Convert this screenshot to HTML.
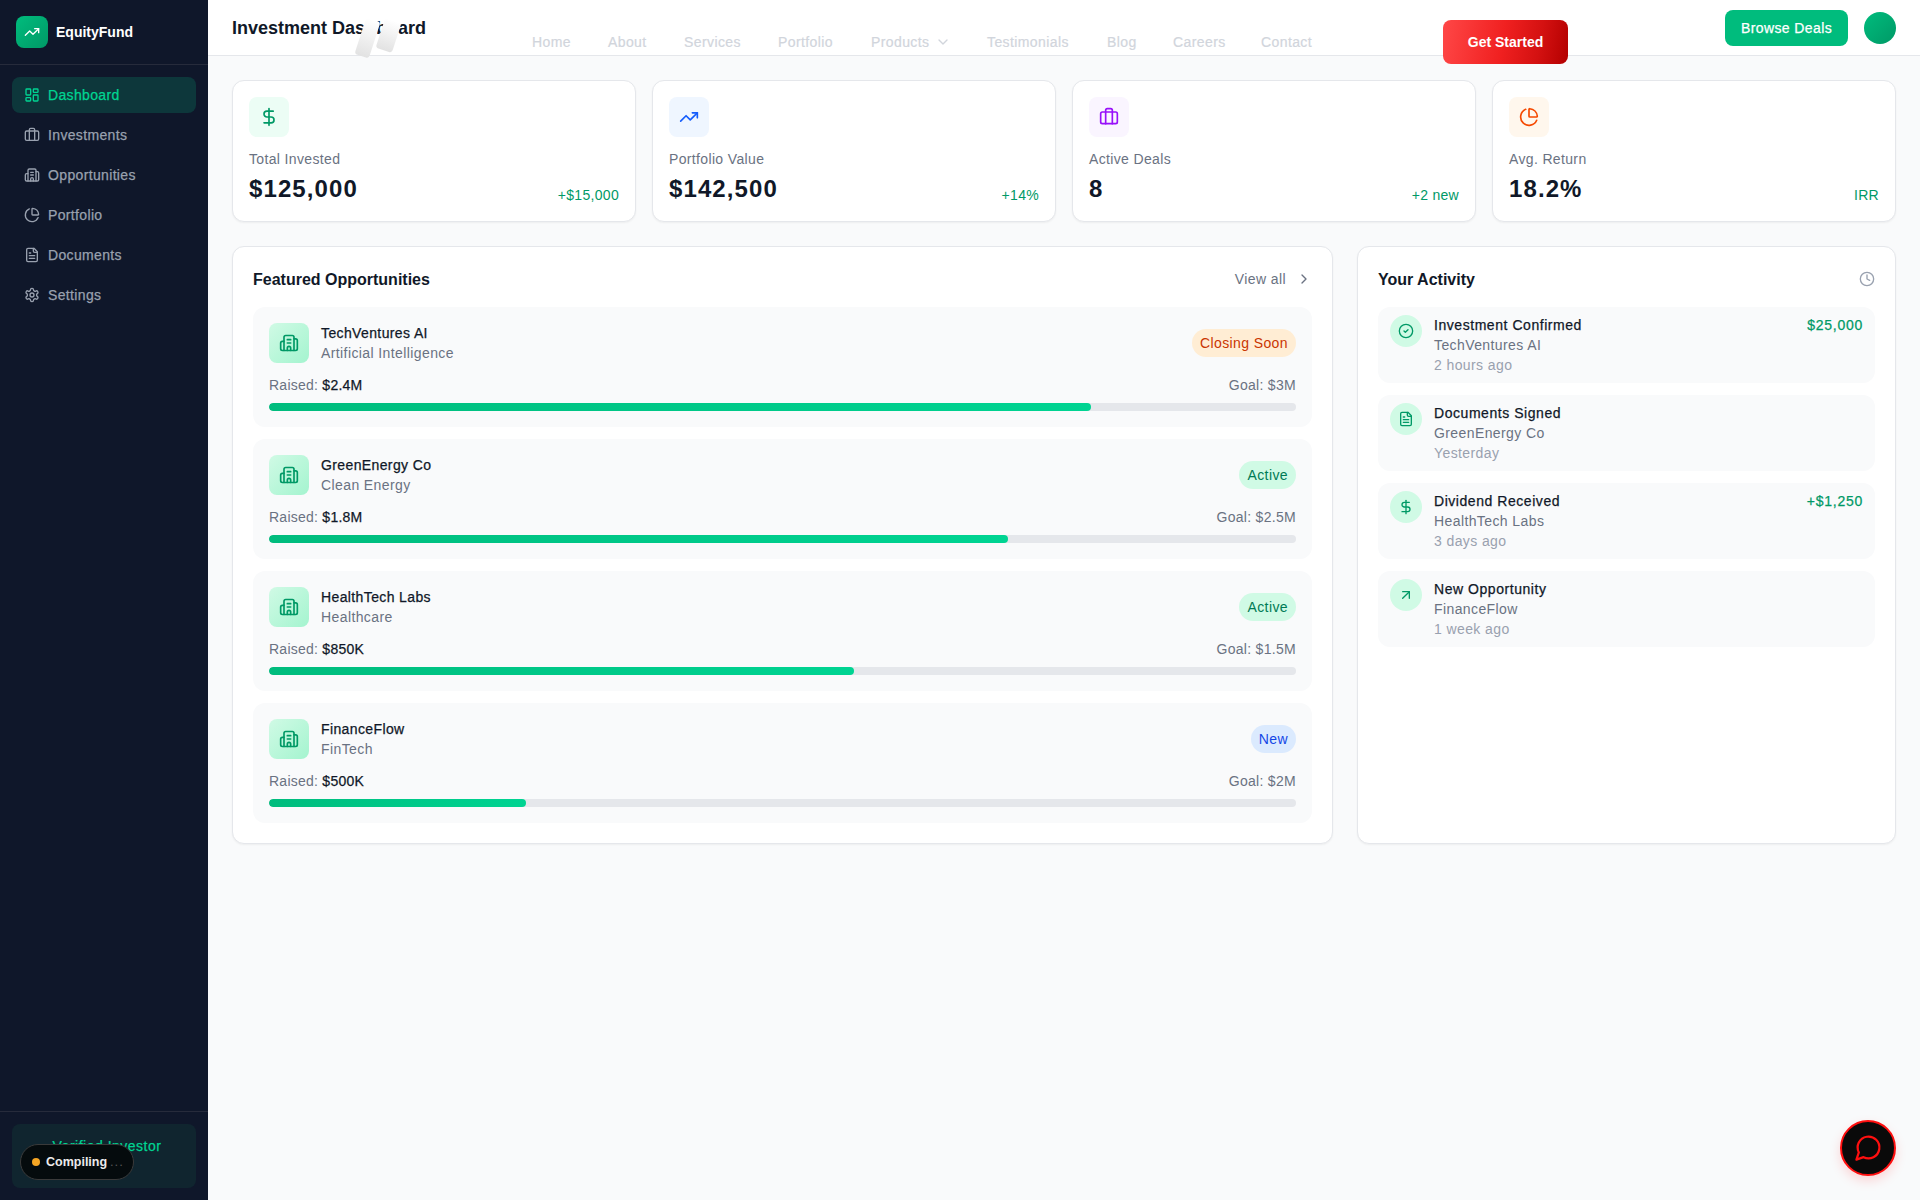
<!DOCTYPE html>
<html><head><meta charset="utf-8">
<style>
*{box-sizing:border-box;margin:0;padding:0}
html,body{width:1920px;height:1200px;overflow:hidden;background:#f9fafb;font-family:"Liberation Sans",sans-serif;color:#101828}
.abs{position:absolute}
svg.i{fill:none;stroke:currentColor;stroke-width:2;stroke-linecap:round;stroke-linejoin:round;display:block}
/* sidebar */
#sb{position:absolute;left:0;top:0;width:208px;height:1200px;background:#0f172a}
#sbh{position:absolute;left:0;top:0;width:208px;height:65px;border-bottom:1px solid #262b3b}
#logo{position:absolute;left:16px;top:16px;width:32px;height:32px;border-radius:8px;background:linear-gradient(135deg,#00bc7d,#009966);color:#fff}
#logo svg{position:absolute;left:8px;top:8px}
#brand{position:absolute;left:56px;top:22px;font-size:14px;line-height:20px;font-weight:700;color:#fff}
.nav{position:absolute;left:12px;width:184px;height:36px;border-radius:8px;color:#99a1af;font-size:14px;line-height:20px;letter-spacing:.35px}
.nav svg{position:absolute;left:12px;top:10px}
.nav span{position:absolute;left:36px;top:8px}
.nav.act{background:#0d373b;color:#00d492}
#sbf{position:absolute;left:0;top:1111px;width:208px;height:89px;border-top:1px solid #262b3b}
#ver{position:absolute;left:12px;top:1124px;width:184px;height:64px;border-radius:8px;background:#10252f;color:#00d492;font-size:14px;line-height:20px;text-align:center;padding-top:12px;padding-left:6px;letter-spacing:.5px}
/* header */
#hd{position:absolute;left:208px;top:0;width:1712px;height:56px;background:#fff;border-bottom:1px solid #e5e7eb}
#title{position:absolute;left:232px;top:16px;font-size:18px;line-height:24px;font-weight:700;color:#101828}
.lnk{position:absolute;top:32px;font-size:14px;line-height:20px;color:#d1d5dc;letter-spacing:.4px;-webkit-text-stroke:.2px currentColor}
#gs{position:absolute;left:1443px;top:20px;width:125px;height:44px;border-radius:8px;background:linear-gradient(100deg,#ff4747 0%,#f02020 48%,#d41111 76%,#b30000 100%);color:#fff;font-size:14px;font-weight:700;line-height:44px;text-align:center}
#bd{position:absolute;left:1725px;top:10px;width:123px;height:36px;border-radius:8px;background:#00bc7d;color:#fff;font-size:14px;line-height:36px;text-align:center;letter-spacing:.4px}
#av{position:absolute;left:1864px;top:12px;width:32px;height:32px;border-radius:50%;background:linear-gradient(135deg,#00bc7d,#009966)}
/* stat cards */
.card{position:absolute;background:#fff;border:1px solid #e5e7eb;border-radius:12px;box-shadow:0 1px 2px rgba(0,0,0,.05)}
.stat{top:80px;width:404px;height:142px}
.sico{position:absolute;left:16px;top:16px;width:40px;height:40px;border-radius:8px}
.sico svg{position:absolute;left:10px;top:10px}
.slab{position:absolute;left:16px;top:68px;font-size:14px;line-height:20px;color:#6a7282;letter-spacing:.35px}
.sval{position:absolute;left:16px;top:92px;font-size:24px;line-height:32px;font-weight:700;color:#101828;letter-spacing:1.1px}
.schg{position:absolute;right:16px;top:104px;font-size:14px;line-height:20px;color:#009966;letter-spacing:.3px}

/* featured */
.big{top:246px;height:598px}
.ctitle{position:absolute;left:20px;top:21px;font-size:16px;line-height:24px;font-weight:700;color:#101828}
.item{position:absolute;left:20px;width:1059px;height:120px;background:#f9fafb;border-radius:12px}
.bico{position:absolute;left:16px;top:16px;width:40px;height:40px;border-radius:8px;background:linear-gradient(135deg,#d0fae5,#a4f4cf);color:#009966}
.bico svg{position:absolute;left:10px;top:10px}
.iname{position:absolute;left:68px;top:16px;font-size:14px;line-height:20px;color:#101828;letter-spacing:.38px}
.icat{position:absolute;left:68px;top:36px;font-size:14px;line-height:20px;color:#6a7282;letter-spacing:.4px}
.badge{position:absolute;right:16px;top:22px;height:28px;padding:0 8px;border-radius:14px;font-size:14px;line-height:28px;letter-spacing:.4px}
.raised{position:absolute;left:16px;top:68px;font-size:14px;line-height:20px;color:#6a7282;letter-spacing:.25px}
.raised b{font-weight:400;color:#101828;-webkit-text-stroke:0.25px currentColor}
.goal{position:absolute;right:16px;top:68px;font-size:14px;line-height:20px;color:#6a7282;letter-spacing:.3px}
.bar{position:absolute;left:16px;top:96px;width:1027px;height:8px;border-radius:4px;background:#e5e7eb;overflow:hidden}
.bar i{position:absolute;left:0;top:0;height:8px;border-radius:4px;background:linear-gradient(90deg,#00bc7d,#00d492)}
/* activity */
.aitem{position:absolute;left:20px;width:497px;height:76px;background:#f9fafb;border-radius:12px}
.acir{position:absolute;left:12px;top:8px;width:32px;height:32px;border-radius:50%;background:#d0fae5;color:#009966}
.acir svg{position:absolute;left:8px;top:8px}
.at1{position:absolute;left:56px;top:8px;font-size:14px;line-height:20px;color:#101828;letter-spacing:.55px}
.at2{position:absolute;left:56px;top:28px;font-size:14px;line-height:20px;color:#6a7282;letter-spacing:.4px}
.at3{position:absolute;left:56px;top:48px;font-size:14px;line-height:20px;color:#99a1af;letter-spacing:.4px}
.aamt{position:absolute;right:12px;top:8px;font-size:14px;line-height:20px;color:#009966;letter-spacing:.75px}

.med{-webkit-text-stroke:0.25px currentColor}
</style></head><body>

<div id="sb">
  <div id="sbh"></div>
  <div id="logo"><svg class="i" width="16" height="16" viewBox="0 0 24 24"><polyline points="22 7 13.5 15.5 8.5 10.5 2 17"/><polyline points="16 7 22 7 22 13"/></svg></div>
  <div id="brand">EquityFund</div>

  <div class="nav act" style="top:77px"><svg class="i" width="16" height="16" viewBox="0 0 24 24"><rect width="7" height="9" x="3" y="3" rx="1"/><rect width="7" height="5" x="14" y="3" rx="1"/><rect width="7" height="9" x="14" y="12" rx="1"/><rect width="7" height="5" x="3" y="16" rx="1"/></svg><span class="med">Dashboard</span></div>
  <div class="nav" style="top:117px"><svg class="i" width="16" height="16" viewBox="0 0 24 24"><path d="M16 20V4a2 2 0 0 0-2-2h-4a2 2 0 0 0-2 2v16"/><rect width="20" height="14" x="2" y="6" rx="2"/></svg><span class="med">Investments</span></div>
  <div class="nav" style="top:157px"><svg class="i" width="16" height="16" viewBox="0 0 24 24"><path d="M10 12h4"/><path d="M10 8h4"/><path d="M14 21v-3a2 2 0 0 0-4 0v3"/><path d="M6 10H4a2 2 0 0 0-2 2v7a2 2 0 0 0 2 2h16a2 2 0 0 0 2-2V9a2 2 0 0 0-2-2h-2"/><path d="M6 21V5a2 2 0 0 1 2-2h8a2 2 0 0 1 2 2v16"/></svg><span class="med">Opportunities</span></div>
  <div class="nav" style="top:197px"><svg class="i" width="16" height="16" viewBox="0 0 24 24"><path d="M21 12c.552 0 1.005-.449.95-.998a10 10 0 0 0-8.953-8.951c-.55-.055-.998.398-.998.95v8a1 1 0 0 0 1 1z"/><path d="M21.21 15.89A10 10 0 1 1 8 2.83"/></svg><span class="med">Portfolio</span></div>
  <div class="nav" style="top:237px"><svg class="i" width="16" height="16" viewBox="0 0 24 24"><path d="M15 2H6a2 2 0 0 0-2 2v16a2 2 0 0 0 2 2h12a2 2 0 0 0 2-2V7Z"/><path d="M14 2v4a2 2 0 0 0 2 2h4"/><path d="M10 9H8"/><path d="M16 13H8"/><path d="M16 17H8"/></svg><span class="med">Documents</span></div>
  <div class="nav" style="top:277px"><svg class="i" width="16" height="16" viewBox="0 0 24 24"><path d="M12.22 2h-.44a2 2 0 0 0-2 2v.18a2 2 0 0 1-1 1.73l-.43.25a2 2 0 0 1-2 0l-.15-.08a2 2 0 0 0-2.73.73l-.22.38a2 2 0 0 0 .73 2.73l.15.1a2 2 0 0 1 1 1.72v.51a2 2 0 0 1-1 1.74l-.15.09a2 2 0 0 0-.73 2.73l.22.38a2 2 0 0 0 2.73.73l.15-.08a2 2 0 0 1 2 0l.43.25a2 2 0 0 1 1 1.73V20a2 2 0 0 0 2 2h.44a2 2 0 0 0 2-2v-.18a2 2 0 0 1 1-1.73l.43-.25a2 2 0 0 1 2 0l.15.08a2 2 0 0 0 2.73-.73l.22-.39a2 2 0 0 0-.73-2.73l-.15-.08a2 2 0 0 1-1-1.74v-.5a2 2 0 0 1 1-1.74l.15-.09a2 2 0 0 0 .73-2.73l-.22-.38a2 2 0 0 0-2.73-.73l-.15.08a2 2 0 0 1-2 0l-.43-.25a2 2 0 0 1-1-1.73V4a2 2 0 0 0-2-2z"/><circle cx="12" cy="12" r="3"/></svg><span class="med">Settings</span></div>

  <div id="sbf"></div>
  <div id="ver" class="med">Verified Investor</div>
</div>

<div id="hd"></div>
<div id="title">Investment Dashboard</div>
<div class="lnk" style="left:532px">Home</div>
<div class="lnk" style="left:608px">About</div>
<div class="lnk" style="left:684px">Services</div>
<div class="lnk" style="left:778px">Portfolio</div>
<div class="lnk" style="left:871px">Products</div>
<div class="abs" style="left:935px;top:34px;color:#d1d5dc"><svg class="i" width="16" height="16" viewBox="0 0 24 24"><path d="m6 9 6 6 6-6"/></svg></div>
<div class="lnk" style="left:987px">Testimonials</div>
<div class="lnk" style="left:1107px">Blog</div>
<div class="lnk" style="left:1173px">Careers</div>
<div class="lnk" style="left:1261px">Contact</div>
<div id="gs">Get Started</div>
<div id="bd" class="med">Browse Deals</div>
<div id="av"></div>

<!-- STATS -->
<div class="card stat" style="left:232px">
  <div class="sico" style="background:#ecfdf5;color:#009966"><svg class="i" width="20" height="20" viewBox="0 0 24 24"><line x1="12" x2="12" y1="2" y2="22"/><path d="M17 5H9.5a3.5 3.5 0 0 0 0 7h5a3.5 3.5 0 0 1 0 7H6"/></svg></div>
  <div class="slab">Total Invested</div><div class="sval">$125,000</div><div class="schg">+$15,000</div>
</div>
<div class="card stat" style="left:652px">
  <div class="sico" style="background:#eff6ff;color:#155dfc"><svg class="i" width="20" height="20" viewBox="0 0 24 24"><polyline points="22 7 13.5 15.5 8.5 10.5 2 17"/><polyline points="16 7 22 7 22 13"/></svg></div>
  <div class="slab">Portfolio Value</div><div class="sval">$142,500</div><div class="schg">+14%</div>
</div>
<div class="card stat" style="left:1072px">
  <div class="sico" style="background:#faf5ff;color:#9810fa"><svg class="i" width="20" height="20" viewBox="0 0 24 24"><path d="M16 20V4a2 2 0 0 0-2-2h-4a2 2 0 0 0-2 2v16"/><rect width="20" height="14" x="2" y="6" rx="2"/></svg></div>
  <div class="slab">Active Deals</div><div class="sval">8</div><div class="schg">+2 new</div>
</div>
<div class="card stat" style="left:1492px">
  <div class="sico" style="background:#fff7ed;color:#f54900"><svg class="i" width="20" height="20" viewBox="0 0 24 24"><path d="M21 12c.552 0 1.005-.449.95-.998a10 10 0 0 0-8.953-8.951c-.55-.055-.998.398-.998.95v8a1 1 0 0 0 1 1z"/><path d="M21.21 15.89A10 10 0 1 1 8 2.83"/></svg></div>
  <div class="slab">Avg. Return</div><div class="sval">18.2%</div><div class="schg">IRR</div>
</div>


<!-- FEATURED -->
<div class="card big" style="left:232px;width:1101px">
  <div class="ctitle">Featured Opportunities</div>
  <div class="abs" style="right:46px;top:22px;font-size:14px;line-height:20px;color:#6a7282;letter-spacing:.4px">View all</div>
  <div class="abs" style="right:20px;top:24px;color:#6a7282"><svg class="i" width="16" height="16" viewBox="0 0 24 24"><path d="m9 18 6-6-6-6"/></svg></div>
  <div class="item" style="top:60px">
    <div class="bico"><svg class="i" width="20" height="20" viewBox="0 0 24 24"><path d="M10 12h4"/><path d="M10 8h4"/><path d="M14 21v-3a2 2 0 0 0-4 0v3"/><path d="M6 10H4a2 2 0 0 0-2 2v7a2 2 0 0 0 2 2h16a2 2 0 0 0 2-2V9a2 2 0 0 0-2-2h-2"/><path d="M6 21V5a2 2 0 0 1 2-2h8a2 2 0 0 1 2 2v16"/></svg></div>
    <div class="iname med">TechVentures AI</div><div class="icat">Artificial Intelligence</div>
    <div class="badge" style="background:#ffedd4;color:#ca3500">Closing Soon</div>
    <div class="raised">Raised: <b>$2.4M</b></div><div class="goal">Goal: $3M</div>
    <div class="bar"><i style="width:821.6px"></i></div>
  </div>
  <div class="item" style="top:192px">
    <div class="bico"><svg class="i" width="20" height="20" viewBox="0 0 24 24"><path d="M10 12h4"/><path d="M10 8h4"/><path d="M14 21v-3a2 2 0 0 0-4 0v3"/><path d="M6 10H4a2 2 0 0 0-2 2v7a2 2 0 0 0 2 2h16a2 2 0 0 0 2-2V9a2 2 0 0 0-2-2h-2"/><path d="M6 21V5a2 2 0 0 1 2-2h8a2 2 0 0 1 2 2v16"/></svg></div>
    <div class="iname med">GreenEnergy Co</div><div class="icat">Clean Energy</div>
    <div class="badge" style="background:#d0fae5;color:#007a55">Active</div>
    <div class="raised">Raised: <b>$1.8M</b></div><div class="goal">Goal: $2.5M</div>
    <div class="bar"><i style="width:739.4px"></i></div>
  </div>
  <div class="item" style="top:324px">
    <div class="bico"><svg class="i" width="20" height="20" viewBox="0 0 24 24"><path d="M10 12h4"/><path d="M10 8h4"/><path d="M14 21v-3a2 2 0 0 0-4 0v3"/><path d="M6 10H4a2 2 0 0 0-2 2v7a2 2 0 0 0 2 2h16a2 2 0 0 0 2-2V9a2 2 0 0 0-2-2h-2"/><path d="M6 21V5a2 2 0 0 1 2-2h8a2 2 0 0 1 2 2v16"/></svg></div>
    <div class="iname med">HealthTech Labs</div><div class="icat">Healthcare</div>
    <div class="badge" style="background:#d0fae5;color:#007a55">Active</div>
    <div class="raised">Raised: <b>$850K</b></div><div class="goal">Goal: $1.5M</div>
    <div class="bar"><i style="width:585.4px"></i></div>
  </div>
  <div class="item" style="top:456px">
    <div class="bico"><svg class="i" width="20" height="20" viewBox="0 0 24 24"><path d="M10 12h4"/><path d="M10 8h4"/><path d="M14 21v-3a2 2 0 0 0-4 0v3"/><path d="M6 10H4a2 2 0 0 0-2 2v7a2 2 0 0 0 2 2h16a2 2 0 0 0 2-2V9a2 2 0 0 0-2-2h-2"/><path d="M6 21V5a2 2 0 0 1 2-2h8a2 2 0 0 1 2 2v16"/></svg></div>
    <div class="iname med">FinanceFlow</div><div class="icat">FinTech</div>
    <div class="badge" style="background:#dbeafe;color:#1447e6">New</div>
    <div class="raised">Raised: <b>$500K</b></div><div class="goal">Goal: $2M</div>
    <div class="bar"><i style="width:256.8px"></i></div>
  </div>
</div>
<!-- ACTIVITY -->
<div class="card big" style="left:1357px;width:539px">
  <div class="ctitle">Your Activity</div>
  <div class="abs" style="right:20px;top:24px;color:#99a1af"><svg class="i" width="16" height="16" viewBox="0 0 24 24"><circle cx="12" cy="12" r="10"/><polyline points="12 6 12 12 16 14"/></svg></div>
  <div class="aitem" style="top:60px">
    <div class="acir"><svg class="i" width="16" height="16" viewBox="0 0 24 24"><circle cx="12" cy="12" r="10"/><path d="m9 12 2 2 4-4"/></svg></div>
    <div class="at1 med">Investment Confirmed</div><div class="at2">TechVentures AI</div><div class="at3">2 hours ago</div>
    <div class="aamt med">$25,000</div>
  </div>
  <div class="aitem" style="top:148px">
    <div class="acir"><svg class="i" width="16" height="16" viewBox="0 0 24 24"><path d="M15 2H6a2 2 0 0 0-2 2v16a2 2 0 0 0 2 2h12a2 2 0 0 0 2-2V7Z"/><path d="M14 2v4a2 2 0 0 0 2 2h4"/><path d="M10 9H8"/><path d="M16 13H8"/><path d="M16 17H8"/></svg></div>
    <div class="at1 med">Documents Signed</div><div class="at2">GreenEnergy Co</div><div class="at3">Yesterday</div>
    
  </div>
  <div class="aitem" style="top:236px">
    <div class="acir"><svg class="i" width="16" height="16" viewBox="0 0 24 24"><line x1="12" x2="12" y1="2" y2="22"/><path d="M17 5H9.5a3.5 3.5 0 0 0 0 7h5a3.5 3.5 0 0 1 0 7H6"/></svg></div>
    <div class="at1 med">Dividend Received</div><div class="at2">HealthTech Labs</div><div class="at3">3 days ago</div>
    <div class="aamt med">+$1,250</div>
  </div>
  <div class="aitem" style="top:324px">
    <div class="acir"><svg class="i" width="16" height="16" viewBox="0 0 24 24"><path d="M7 7h10v10"/><path d="M7 17 17 7"/></svg></div>
    <div class="at1 med">New Opportunity</div><div class="at2">FinanceFlow</div><div class="at3">1 week ago</div>
    
  </div>
</div>

<!-- overlays -->
<div class="abs" style="left:360px;top:19px;width:15px;height:38px;border-radius:3px;background:linear-gradient(180deg,#ffffff,#e2e2e2);transform:rotate(18deg)"></div>
<div class="abs" style="left:380.2px;top:19.5px;width:17px;height:31px;border-radius:3px;background:linear-gradient(180deg,#ffffff,#e2e2e2);transform:rotate(18deg)"></div>
<div class="abs" style="left:20px;top:1144px;width:114px;height:36px;border-radius:18px;background:#050b0d;border:1px solid #3a3a3a"></div>
<div class="abs" style="left:32px;top:1158px;width:8px;height:8px;border-radius:50%;background:#f5a524"></div>
<div class="abs" style="left:46px;top:1153px;font-size:12.5px;line-height:18px;font-weight:700;color:#ececec">Compiling</div>
<div class="abs" style="left:110px;top:1153px;font-size:13px;line-height:18px;color:#555;letter-spacing:1px">...</div>
<div class="abs" style="left:1840px;top:1120px;width:56px;height:56px;border-radius:50%;background:#0a0a0a;border:2px solid #ff0f0f;box-shadow:0 5px 12px rgba(255,0,0,.15);color:#ff0f0f">
  <svg class="i" width="29" height="29" viewBox="0 0 24 24" style="position:absolute;left:11.5px;top:11px;stroke-width:1.85"><path d="M7.9 20A9 9 0 1 0 4 16.1L2 22Z"/></svg>
</div>
</body></html>
